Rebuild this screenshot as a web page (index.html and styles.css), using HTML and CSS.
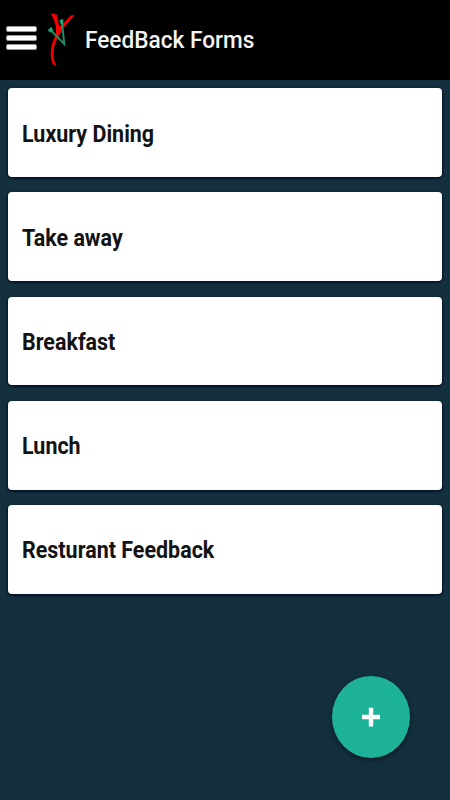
FILE: index.html
```html
<!DOCTYPE html>
<html lang="en">
<head>
    <meta charset="UTF-8">
    <meta name="viewport" content="width=device-width, initial-scale=1.0">
    <title>FeedBack Forms</title>
    <link rel="stylesheet" href="styles.css">
</head>
<body>
    <header class="header">
        <button class="menu" aria-label="Menu">
            <span class="bar"></span>
            <span class="bar"></span>
            <span class="bar"></span>
        </button>
        <svg class="logo" width="28" height="56" viewBox="0 0 28 56">
            <path d="M3 1 L5.5 2.2 L7 1.5 L9.5 3 L11 2 L10 5 L12.5 15 L24 3.5 L27.5 3 L26 5 L16 16.5 C13 21 12 24 9.5 28 C6 35 5.5 46 8.5 52 L9.5 53.5 L6.5 53 C2.5 47 3.3 35 6.5 28 C8.5 24 9.5 20 9 17 C8.5 10 6 5 3 1 Z" fill="#f40000"/>
            <path d="M3 17.5 L17.3 32 L14.8 9.5" fill="none" stroke="#208a60" stroke-width="2"/>
            <path d="M0.5 18.5 L4 15 L6.5 18 L4 20.5 Z M12.3 9 L14.5 7 L16.5 7.5 L16.2 13 L13.5 12 Z" fill="#24a273"/>
            <path d="M9.5 12 L12 15 L14 13.5 L14 18 L11 22.5 L9 20 Z" fill="#f40000"/>
        </svg>
        <h1 class="title">FeedBack Forms</h1>
    </header>
    <main class="list">
        <div class="card"><span class="name">Luxury Dining</span></div>
        <div class="card"><span class="name">Take away</span></div>
        <div class="card"><span class="name">Breakfast</span></div>
        <div class="card"><span class="name">Lunch</span></div>
        <div class="card"><span class="name">Resturant Feedback</span></div>
    </main>
    <button class="add" aria-label="Add form">
        <svg width="20" height="20" viewBox="0 0 20 20">
            <path d="M10 0.8 V19.6 M1 10 H19" stroke="#fff" stroke-width="4.4"/>
        </svg>
    </button>
</body>
</html>
```
FILE: styles.css
```css
* {
    box-sizing: border-box;
}

body {
    margin: 0;
    height: 800px;
    overflow: hidden;
    background-color: #14303f;
    font-family: Roboto, "Liberation Sans", sans-serif;
}

.header {
    display: flex;
    align-items: flex-start;
    height: 80px;
    padding-left: 6px;
    background-color: #000;
}

.menu {
    display: flex;
    flex-direction: column;
    gap: 3px;
    width: 31px;
    margin-top: 26px;
    padding: 0;
    border: 0;
    background: none;
}

.bar {
    width: 31px;
    height: 6px;
    border: 1px solid #999;
    border-radius: 2px;
    background-color: #fff;
}

.logo {
    margin: 12px 0 0 10px;
}

.title {
    margin: 26px 0 0 9.5px;
    font-size: 24px;
    line-height: 28px;
    font-weight: 500;
    color: #f4f4f4;
    white-space: nowrap;
    transform: scaleX(0.943);
    transform-origin: left;
}

.list {
    display: flex;
    flex-direction: column;
    gap: 15.2px;
    padding: 8.4px 8px;
}

.card {
    display: flex;
    align-items: center;
    height: 88.9px;
    padding: 4px 14px 0;
    border-radius: 4px;
    background-color: #fff;
    box-shadow: 0 1px 2px 1px #041525;
}

.name {
    font-size: 23px;
    line-height: 28px;
    font-weight: 700;
    color: #131313;
    transform: scaleX(0.933);
    transform-origin: left;
}

/* floating action button */
.add {
    position: absolute;
    left: 332px;
    top: 676px;
    display: flex;
    align-items: center;
    justify-content: center;
    width: 78px;
    height: 82px;
    padding: 0;
    border: 0;
    border-radius: 50%;
    background-color: #1eb398;
    box-shadow: 0 2px 6px rgba(0, 0, 0, 0.5);
}
```
